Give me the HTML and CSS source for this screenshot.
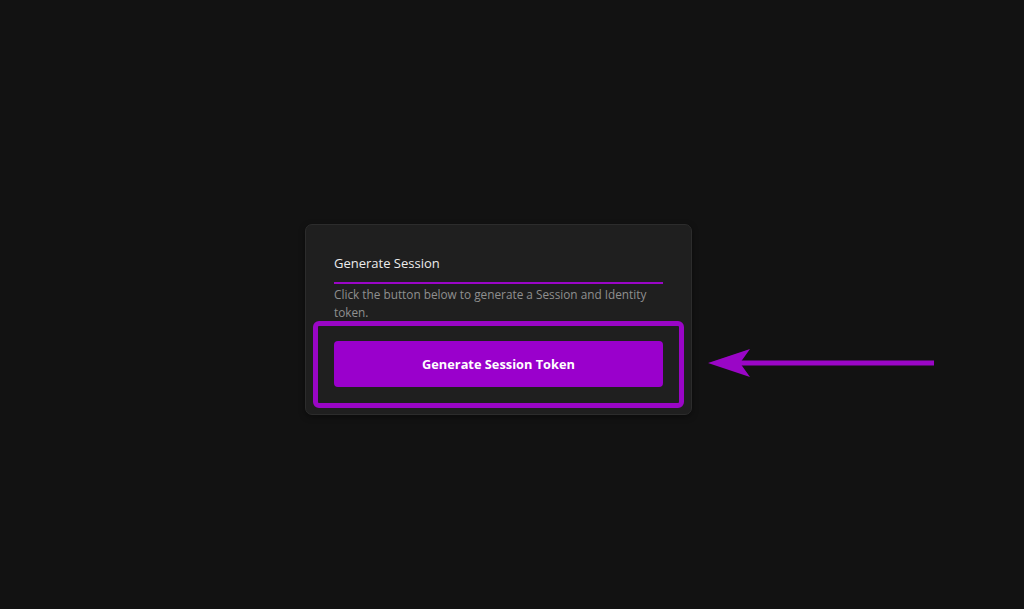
FILE: index.html
```html
<!DOCTYPE html>
<html lang="en">
<head>
  <meta charset="UTF-8">
  <meta name="viewport" content="width=device-width, initial-scale=1.0">
  <title>Generate Session</title>
  <link rel="stylesheet" href="styles.css">
</head>
<body>
  <div class="page">
    <div class="card">
      <h2 class="card-title">Generate Session</h2>
      <p class="card-text">Click the button below to generate a Session and Identity token.</p>
      <div class="action">
        <button class="generate-button">Generate Session Token</button>
        <div class="highlight"></div>
      </div>
    </div>
  </div>

  <svg class="arrow" width="240" height="40" viewBox="0 0 240 40">
    <line x1="30" y1="20" x2="232" y2="20" stroke="#9a06c6" stroke-width="5"/>
    <polygon points="6,20 48,6 38,20 48,34" fill="#9a06c6"/>
  </svg>
</body>
</html>
```

FILE: styles.css
```css
body {
  margin: 0;
  background-color: #121212;
  font-family: "Open Sans", "Noto Sans", sans-serif;
  height: 609px;
  overflow: hidden;
  position: relative;
}
.page {
  padding-top: 224px;
  padding-left: 305px;
}
.card {
  width: 329px;
  padding: 29px 28px 27px 28px;
  background-color: #1f1f1f;
  border: 1px solid #2c2c2c;
  border-radius: 7px;
  box-shadow: 0 2px 6px rgba(0, 0, 0, 0.4);
}
.card-title {
  margin: 0;
  padding-bottom: 10px;
  font-size: 13px;
  font-weight: 400;
  line-height: 18px;
  color: #ececec;
  border-bottom: 2px solid #9a06c6;
}
.card-text {
  margin: 1px 0 0 0;
  font-size: 11.8px;
  line-height: 18px;
  color: #8f8f8f;
}
.action {
  position: relative;
  margin-top: 20px;
}
.generate-button {
  display: block;
  width: 100%;
  height: 46px;
  border: none;
  border-radius: 4px;
  background-color: #9a00cc;
  color: #ffffff;
  font-family: "Open Sans", "Noto Sans", sans-serif;
  font-size: 12.8px;
  font-weight: 700;
  cursor: pointer;
}
.highlight {
  position: absolute;
  top: -20px;
  left: -21px;
  right: -21px;
  bottom: -21px;
  border: 5px solid #9a06c6;
  border-radius: 6px;
  pointer-events: none;
}
.arrow {
  position: absolute;
  left: 702px;
  top: 343px;
}
```
